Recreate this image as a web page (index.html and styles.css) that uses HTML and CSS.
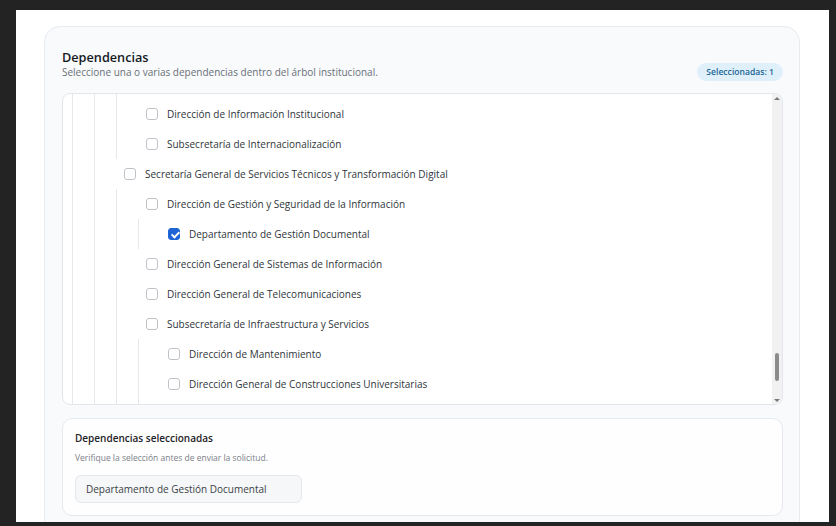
FILE: index.html
```html
<!DOCTYPE html>
<html lang="es">
<head>
    <meta charset="UTF-8">
    <meta name="viewport" content="width=device-width, initial-scale=1.0">
    <title>Solicitud - Dependencias</title>
    <link rel="stylesheet" href="styles.css">
</head>
<body>
    <main class="page">
        <section class="panel">
            <header class="panel-head">
                <div>
                    <h2 class="panel-title">Dependencias</h2>
                    <p class="panel-sub">Seleccione una o varias dependencias dentro del árbol institucional.</p>
                </div>
                <span class="badge">Seleccionadas: 1</span>
            </header>

            <div class="tree-box">
                <div class="tree-scroll">
                    <!-- el arbol se muestra desplazado; las ramas superiores quedan fuera de vista -->
                    <ul class="tree">
                        <li>
                            <ul class="branch">
                                <li>
                                    <ul class="branch">
                                        <li>
                                            <ul class="branch first">
                                                <li><label class="node"><input type="checkbox"> Dirección de Información Institucional</label></li>
                                                <li><label class="node"><input type="checkbox"> Subsecretaría de Internacionalización</label></li>
                                            </ul>
                                        </li>
                                        <li>
                                            <label class="node"><input type="checkbox"> Secretaría General de Servicios Técnicos y Transformación Digital</label>
                                            <ul class="branch">
                                                <li>
                                                    <label class="node"><input type="checkbox"> Dirección de Gestión y Seguridad de la Información</label>
                                                    <ul class="branch">
                                                        <li><label class="node"><input type="checkbox" checked> Departamento de Gestión Documental</label></li>
                                                    </ul>
                                                </li>
                                                <li><label class="node"><input type="checkbox"> Dirección General de Sistemas de Información</label></li>
                                                <li><label class="node"><input type="checkbox"> Dirección General de Telecomunicaciones</label></li>
                                                <li>
                                                    <label class="node"><input type="checkbox"> Subsecretaría de Infraestructura y Servicios</label>
                                                    <ul class="branch last">
                                                        <li><label class="node"><input type="checkbox"> Dirección de Mantenimiento</label></li>
                                                        <li><label class="node"><input type="checkbox"> Dirección General de Construcciones Universitarias</label></li>
                                                    </ul>
                                                </li>
                                            </ul>
                                        </li>
                                    </ul>
                                </li>
                            </ul>
                        </li>
                    </ul>
                </div>
                <div class="scrollbar">
                    <span class="arrow up"></span>
                    <div class="track"><span class="thumb"></span></div>
                    <span class="arrow down"></span>
                </div>
            </div>

            <div class="summary">
                <h3 class="summary-title">Dependencias seleccionadas</h3>
                <p class="summary-sub">Verifique la selección antes de enviar la solicitud.</p>
                <div class="chips">
                    <span class="chip">Departamento de Gestión Documental</span>
                </div>
            </div>
        </section>
    </main>
</body>
</html>
```

FILE: styles.css
```css
* {
    box-sizing: border-box;
}

body {
    margin: 0;
    height: 526px;
    overflow: hidden;
    background: #232323;
    font-family: 'Segoe UI', 'Open Sans', sans-serif;
    color: #2f3337;
}

.page {
    margin: 10px 7px 0 16px;
    height: 512px;
    overflow: hidden;
    background: #fff;
    padding: 16px 29px 0 28px;
}

.panel {
    background: #f8fafc;
    border: 1px solid #e7ebf0;
    border-radius: 16px;
    padding: 22px 16px 20px 17px;
}

/* cabecera */
.panel-head {
    display: flex;
    justify-content: space-between;
    align-items: flex-end;
    margin-bottom: 14px;
}

.panel-title {
    margin: 0;
    font-size: 12.7px;
    line-height: 16px;
    font-weight: 600;
    color: #15191e;
}

.panel-sub {
    margin: 1px 0 0;
    font-size: 10px;
    line-height: 13px;
    color: #6a7078;
}

.badge {
    height: 18px;
    line-height: 18px;
    margin-bottom: -2px;
    padding: 0 9px;
    border-radius: 9px;
    background: #dff0fb;
    color: #1c6696;
    font-size: 8.6px;
    font-weight: 600;
}

/* arbol */
.tree-box {
    display: flex;
    height: 312px;
    background: #fff;
    border: 1px solid #e3e7ec;
    border-radius: 8px;
    overflow: hidden;
}

.tree-scroll {
    flex: 1;
    overflow: hidden;
}

.tree,
.branch {
    list-style: none;
    margin: 0;
}

.tree {
    padding: 0 0 0 9px;
}

.branch {
    padding: 0 0 0 21px;
    border-left: 1px solid #e6e8eb;
}

.branch.first {
    padding-top: 5px;
}

.branch.last {
    padding-bottom: 12px;
}

.node {
    display: flex;
    align-items: center;
    gap: 9px;
    height: 30px;
    padding-left: 8px;
    font-size: 10px;
    color: #30353a;
    white-space: nowrap;
}

.node input {
    appearance: none;
    -webkit-appearance: none;
    position: relative;
    flex: none;
    width: 12px;
    height: 12px;
    margin: 0;
    border: 1px solid #bfc3c8;
    border-radius: 3px;
    background: #fff;
}

.node input:checked {
    background: #1f64d4;
    border-color: #1f64d4;
}

.node input:checked::after {
    content: '';
    position: absolute;
    left: 3.5px;
    top: 1px;
    width: 3px;
    height: 6px;
    border: solid #fff;
    border-width: 0 2px 2px 0;
    transform: rotate(45deg);
}

/* barra de desplazamiento */
.scrollbar {
    flex: none;
    width: 10px;
    display: flex;
    flex-direction: column;
    background: #f1f1f1;
}

.arrow {
    flex: none;
    height: 8px;
    display: flex;
    justify-content: center;
    align-items: center;
}

.arrow::before {
    content: '';
    border-left: 3px solid transparent;
    border-right: 3px solid transparent;
}

.arrow.up::before {
    border-bottom: 3px solid #7a7a7a;
}

.arrow.down::before {
    border-top: 3px solid #7a7a7a;
}

.track {
    flex: 1;
    display: flex;
    justify-content: center;
}

.thumb {
    width: 4px;
    height: 28px;
    margin-top: 251px;
    border-radius: 2px;
    background: #8b8b8b;
}

/* seleccion */
.summary {
    margin-top: 13px;
    background: #fefefe;
    border: 1px solid #e6e9ee;
    border-radius: 10px;
    padding: 12px;
}

.summary-title {
    margin: 0;
    font-size: 10px;
    line-height: 15px;
    font-weight: 600;
    color: #1e2227;
}

.summary-sub {
    margin: 6px 0 0;
    font-size: 8.5px;
    line-height: 12px;
    color: #7b8088;
}

.chips {
    margin-top: 11px;
    display: flex;
    gap: 8px;
}

.chip {
    display: inline-flex;
    align-items: center;
    min-width: 227px;
    height: 28px;
    padding: 0 10px;
    background: #f6f7f9;
    border: 1px solid #e4e7eb;
    border-radius: 6px;
    font-size: 10px;
    color: #3a3f45;
}
```
